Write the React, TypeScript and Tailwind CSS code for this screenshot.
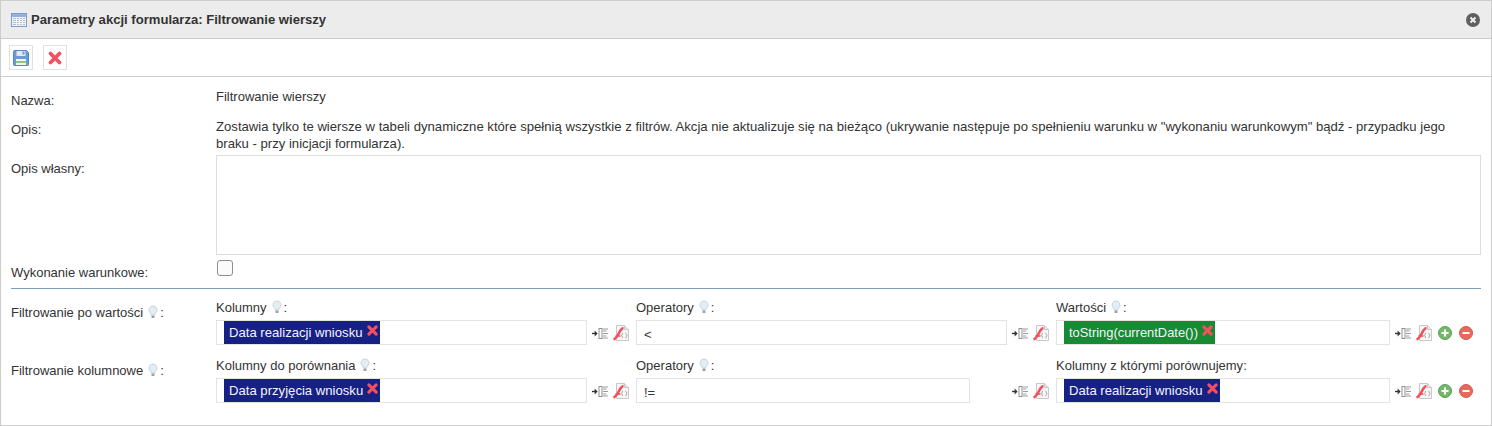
import type { ReactNode } from 'react'

const FONT = "font-['Liberation_Sans',Arial,sans-serif]"

function TableIcon() {
  return (
    <svg width="16" height="16" viewBox="0 0 16 16" className="shrink-0">
      <rect x="0.5" y="1.5" width="15" height="13" fill="#eef3fa" stroke="#7f9cc9" />
      <rect x="1" y="2" width="14" height="3" fill="#8fb0e0" />
      <path d="M2 6.5h12M2 8.5h12M2 10.5h12M2 12.5h12" stroke="#b5bfcc" strokeWidth="1" />
      <path d="M5.5 6v7M8.5 6v7M11.5 6v7" stroke="#f4f6f9" strokeWidth="1" />
    </svg>
  )
}

function SaveIcon() {
  return (
    <svg width="16" height="16" viewBox="0 0 16 16">
      <path d="M0.5 1.5a1 1 0 0 1 1-1h12l2 2v12a1 1 0 0 1-1 1h-13a1 1 0 0 1-1-1z" fill="#6c9cd8" stroke="#5585c0" />
      <rect x="3.5" y="1" width="9" height="5" fill="#dfe8f4" />
      <rect x="9.5" y="1.5" width="2" height="3" fill="#6c9cd8" />
      <rect x="3" y="9" width="10" height="6" fill="#f2f5ee" />
      <rect x="3" y="11" width="10" height="2" fill="#8fcb74" />
    </svg>
  )
}

function RedX({ size = 16 }: { size?: number }) {
  return (
    <svg width={size} height={size} viewBox="0 0 16 16" className="shrink-0">
      <path d="M3.5 3.5l9 9M12.5 3.5l-9 9" stroke="#f4505f" strokeWidth="3.8" strokeLinecap="round" />
    </svg>
  )
}

function CloseIcon() {
  return (
    <svg width="14" height="14" viewBox="0 0 14 14">
      <circle cx="7" cy="7" r="7" fill="#5f5f5f" />
      <path d="M4.5 4.5l5 5M9.5 4.5l-5 5" stroke="#f0f0f0" strokeWidth="2" />
    </svg>
  )
}

function BulbIcon() {
  return (
    <svg width="10" height="14" viewBox="0 0 10 14" className="inline-block align-[-2px]">
      <path d="M5 1a4 4 0 0 0-2.4 7.2c.5.4.7 1 .7 1.8h3.4c0-.8.2-1.4.7-1.8A4 4 0 0 0 5 1z" fill="#e2edf4" stroke="#c6d4dd" />
      <rect x="3.5" y="10.5" width="3" height="2.5" fill="#a0a0a0" />
    </svg>
  )
}

function ColumnPickIcon() {
  return (
    <svg width="16" height="11" viewBox="0 0 16 11" className="shrink-0">
      <path d="M0 5.5h3.5" stroke="#333" strokeWidth="1.4" />
      <path d="M2.6 2.5l3 3-3 3z" fill="#333" />
      <rect x="7" y="0.5" width="3" height="10" fill="#fff" stroke="#8f8f8f" />
      <path d="M11 1h5M11 3h3.5M11 5.5h5M11 8h3.5M11 10h5" stroke="#9c9c9c" />
    </svg>
  )
}

function ScriptIcon() {
  return (
    <svg width="16" height="16" viewBox="0 0 16 16" className="shrink-0">
      <path d="M3.5 0.5h8l4 4v11h-12z" fill="#f7f7f7" stroke="#c8c8c8" />
      <path d="M11.5 0.5v4h4" fill="#e5e5e5" stroke="#c8c8c8" />
      <path d="M0.5 14.5C3 13.5 4.5 11 6 8s2.4-4.7 4.5-5" fill="none" stroke="#f0505a" strokeWidth="2.6" />
      <path d="M2.5 11h5" stroke="#f0505a" strokeWidth="1.6" />
      <path d="M10 8c-1 0-.6 2-1.4 2.5.8.5.4 2.5 1.4 2.5M12.5 8c1 0 .6 2 1.4 2.5-.8.5-.4 2.5-1.4 2.5" fill="none" stroke="#8a8a8a" strokeWidth="0.8" />
    </svg>
  )
}

function RoundButton({ kind }: { kind: 'add' | 'remove' }) {
  const add = kind === 'add'
  return (
    <svg width="14" height="14" viewBox="0 0 14 14" className="shrink-0">
      <circle cx="7" cy="7" r="6.5" fill={add ? '#74b86a' : '#e8695c'} stroke={add ? '#5c9c58' : '#cf5b50'} />
      {add && <path d="M7 3.5v7" stroke="#fff" strokeWidth="2" />}
      <path d="M3.5 7h7" stroke="#fff" strokeWidth="2" />
    </svg>
  )
}

function Chip({ label, className }: { label: string; className: string }) {
  return (
    <span className={`flex h-[23px] items-center gap-[3px] pl-[5px] pr-px pt-[2px] leading-none text-[#f4f4ff] ${className}`}>
      {label}
      <span className="mt-[-6px]">
        <RedX size={13} />
      </span>
    </span>
  )
}

function Field({ label, hint, width, children, extra }: {
  label: string
  hint?: boolean
  width: string
  children: ReactNode
  extra?: boolean
}) {
  return (
    <div className="w-[420px] shrink-0">
      <div className="h-[20px] leading-[15px]">
        {label}
        {hint && <span className="ml-[5px] mr-[2px]"><BulbIcon /></span>}:
      </div>
      <div className="flex items-center">
        <div className={`flex h-[25px] items-center border border-[#e3e3e3] pl-[7px] ${width}`}>{children}</div>
        <div className="ml-[5px] mt-[2px] flex items-center gap-[5px]">
          <ColumnPickIcon />
          <ScriptIcon />
          {extra && (
            <div className="ml-px flex gap-[7px]">
              <RoundButton kind="add" />
              <RoundButton kind="remove" />
            </div>
          )}
        </div>
      </div>
    </div>
  )
}

function Op({ text }: { text: string }) {
  return <span className="pt-[6px] text-[13px]">{text}</span>
}

export default function App() {
  return (
    <div className={`${FONT} h-[426px] w-[1492px] border border-[#cccccc] bg-white text-[13px] text-[#333333]`}>
      {/* Header */}
      <div className="flex h-[38px] items-center border-b border-[#cccccc] bg-[#ececec] pl-[10px] pr-[11px]">
        <TableIcon />
        <span className="ml-[4px] text-[13.09px] font-bold">Parametry akcji formularza: Filtrowanie wierszy</span>
        <span className="ml-auto flex"><CloseIcon /></span>
      </div>

      {/* Toolbar */}
      <div className="flex h-[38px] items-center gap-[10px] border-b border-[#cccccc] pl-[8px]">
        <button className="flex h-[25px] w-[24px] items-center justify-center border border-[#e0e0e0]"><SaveIcon /></button>
        <button className="flex h-[25px] w-[24px] items-center justify-center border border-[#e0e0e0]"><RedX /></button>
      </div>

      <div className="pl-[10px] pr-[9px]">
        <div className="flex pt-[11px]">
          <div className="w-[205px] shrink-0 pt-[3px]">Nazwa:</div>
          <div className="leading-[17px]">Filtrowanie wierszy</div>
        </div>
        <div className="mt-[3px] flex h-[34px]">
          <div className="w-[205px] shrink-0 pt-[6px]">Opis:</div>
          <div className="w-[1240px] pt-[4px] text-[13.14px] leading-[17px]">
            Zostawia tylko te wiersze w tabeli dynamiczne które spełnią wszystkie z filtrów. Akcja nie aktualizuje się na bieżąco (ukrywanie następuje po spełnieniu warunku w "wykonaniu warunkowym" bądź - przypadku jego braku - przy inicjacji formularza).
          </div>
        </div>
        <div className="mt-[7px] flex">
          <div className="w-[205px] shrink-0 pt-[4px]">Opis własny:</div>
          <div className="h-[100px] w-[1265px] border border-[#dddddd]" />
        </div>
        <div className="flex h-[33px] items-start">
          <div className="w-[205px] shrink-0 pt-[8px]">Wykonanie warunkowe:</div>
          <div className="ml-px mt-[5px] h-[16px] w-[16px] rounded-[3px] border border-[#8f8f8f] bg-[#fbfbfb]" />
        </div>
        <div className="h-px w-[1470px] bg-[#7c9fbd]" />

        <div className="mt-[11px] flex">
          <div className="w-[205px] shrink-0 pt-[3px]">Filtrowanie po wartości<span className="ml-[5px] mr-[2px]"><BulbIcon /></span>:</div>
          <Field label="Kolumny" hint width="w-[371px]">
            <Chip label="Data realizacji wniosku" className="bg-[#172183] text-[13.13px]" />
          </Field>
          <Field label="Operatory" hint width="w-[371px]"><Op text="<" /></Field>
          <Field label="Wartości" hint width="w-[334px]" extra>
            <Chip label="toString(currentDate())" className="bg-[#178a33] text-[12.9px]" />
          </Field>
        </div>

        <div className="mt-[13px] flex">
          <div className="w-[205px] shrink-0 pt-[3px]">Filtrowanie kolumnowe<span className="ml-[5px] mr-[2px]"><BulbIcon /></span>:</div>
          <Field label="Kolumny do porównania" hint width="w-[371px]">
            <Chip label="Data przyjęcia wniosku" className="bg-[#172183] text-[13.13px]" />
          </Field>
          <Field label="Operatory" hint width="w-[334px] mr-[37px]"><Op text="!=" /></Field>
          <Field label="Kolumny z którymi porównujemy" width="w-[334px]" extra>
            <Chip label="Data realizacji wniosku" className="bg-[#172183] text-[13.13px]" />
          </Field>
        </div>
      </div>
    </div>
  )
}
